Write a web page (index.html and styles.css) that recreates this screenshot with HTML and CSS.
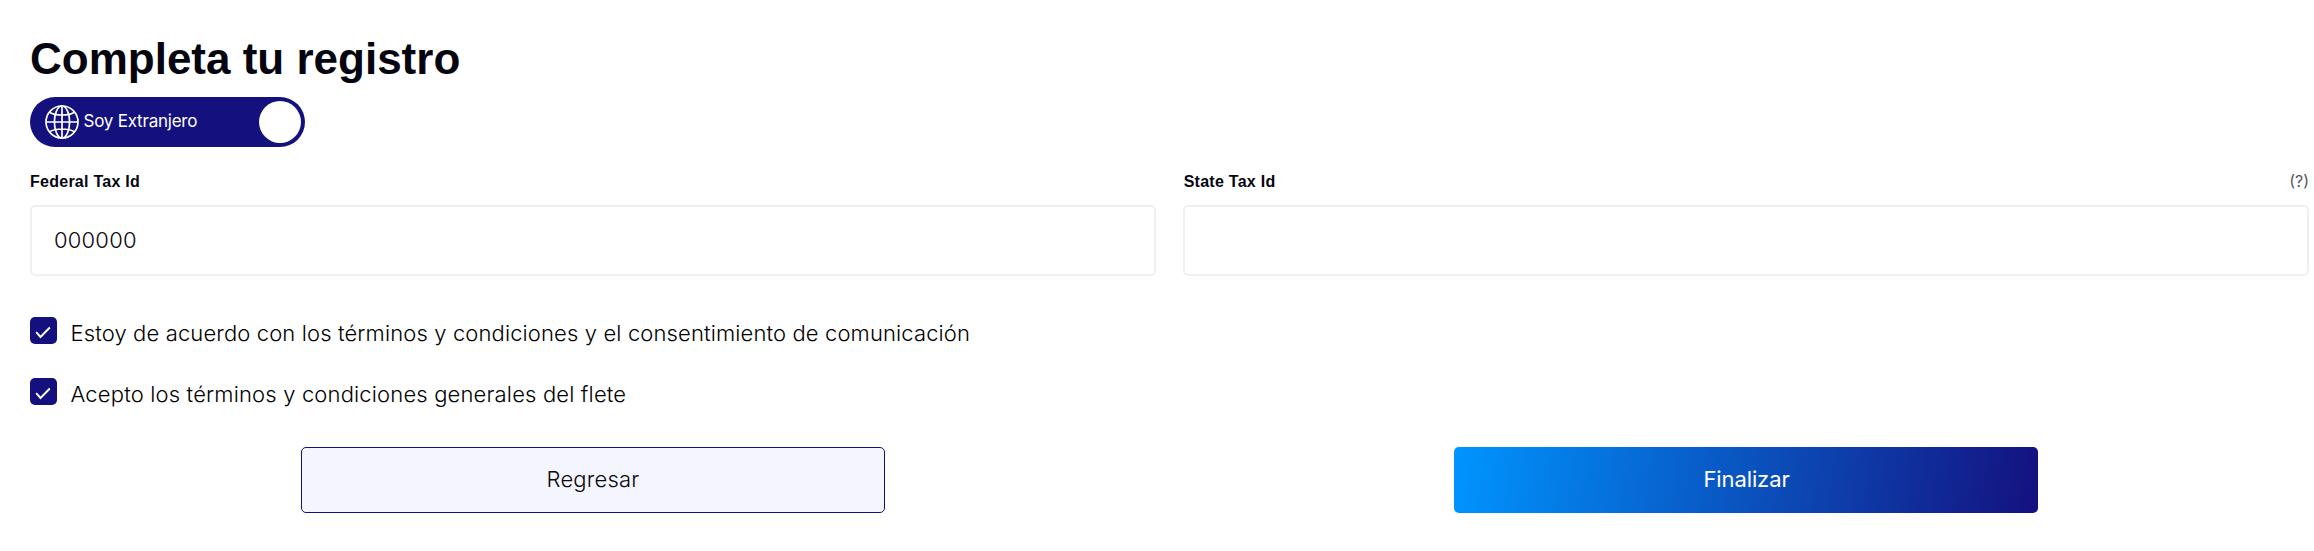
FILE: index.html
```html
<!DOCTYPE html>
<html lang="es">
<head>
<meta charset="utf-8">
<title>Completa tu registro</title>
<link rel="stylesheet" href="styles.css">
</head>
<body>
<main class="page">
  <h1 class="title">Completa tu registro</h1>
  <div class="toggle">
    <svg class="globe" viewBox="0 0 34 34" fill="none" stroke="currentColor" stroke-width="1.7">
      <circle cx="17" cy="17" r="16"/>
      <ellipse cx="17" cy="17" rx="7.6" ry="16"/>
      <path d="M17 1v32M1 17h32M4.6 7.2C8 9.500 12 10 17 10s9-.5 12.400-2.800M4.600 26.800C8 24.500 12 24 17 24s9 .5 12.400 2.800"/>
    </svg>
    <span class="toggle-text">Soy Extranjero</span>
    <span class="knob"></span>
  </div>
  <div class="fields">
    <div class="field">
      <div class="field-head"><span class="label">Federal Tax Id</span></div>
      <div class="input"><span class="value">000000</span></div>
    </div>
    <div class="field">
      <div class="field-head"><span class="label">State Tax Id</span><span class="help">(?)</span></div>
      <div class="input"></div>
    </div>
  </div>
  <div class="checks">
    <div class="check">
      <svg class="box" viewBox="0 0 27 27"><rect width="27" height="27" rx="5" fill="#14117f"/><path d="M6.200 15.200l4.300 4.800L19.800 10.500" fill="none" stroke="#fff" stroke-width="1.900"/></svg>
      <span class="check-text terms">Estoy de acuerdo con los términos y condiciones y el consentimiento de comunicación</span>
    </div>
    <div class="check">
      <svg class="box" viewBox="0 0 27 27"><rect width="27" height="27" rx="5" fill="#14117f"/><path d="M6.200 15.200l4.300 4.800L19.800 10.500" fill="none" stroke="#fff" stroke-width="1.900"/></svg>
      <span class="check-text">Acepto los términos y condiciones generales del flete</span>
    </div>
  </div>
  <div class="actions">
    <button class="btn back">Regresar</button>
    <button class="btn finish">Finalizar</button>
  </div>
</main>
</body>
</html>
```
FILE: styles.css
```css
* { box-sizing: border-box; }
body { margin: 0; background: #fff; color: #05050f; font-family: Inter, sans-serif; }
.page { padding: 34px 5px 0 30px; }
.title { margin: 0; height: 63px; font: bold 44px/50px "Liberation Sans", Arial, sans-serif; }
.toggle { display: flex; align-items: center; width: 275px; height: 50px; padding: 0 4px 0 15px; border-radius: 25px; background: #14117f; color: #fff; }
.globe { width: 34px; height: 34px; }
.toggle-text { margin-left: 4.5px; padding-bottom: 2px; font-size: 17px; letter-spacing: -.22px; }
.knob { width: 42px; height: 42px; margin-left: auto; border-radius: 50%; background: #fff; }
.fields { display: grid; grid-template-columns: 1fr 1fr; gap: 27px; margin-top: 22px; }
.field-head { display: flex; justify-content: space-between; height: 36px; line-height: 24px; }
.label { font: bold 16px/26px "Liberation Sans", Arial, sans-serif; letter-spacing: .26px; }
.field:last-child .label { padding-left: .7px; }
.help { font-size: 16px; color: #55555e; }
.input { display: flex; align-items: center; height: 71px; padding: 0 22px; border: 2px solid #efeff6; border-radius: 5px; }
.value { padding-bottom: 2px; font-size: 22px; font-weight: 300; letter-spacing: .2px; }
.checks { display: grid; gap: 34px; margin-top: 41px; color: #000; }
.check { display: flex; gap: 14px; height: 27px; }
.box { width: 27px; height: 27px; }
.check-text { margin-left: -.5px; font-size: 22px; line-height: 32px; font-weight: 300; letter-spacing: .16px; }
.terms { letter-spacing: .125px; }
.actions { display: flex; justify-content: space-between; padding: 0 271px; margin-top: 42px; }
.btn { width: 584px; height: 66px; padding: 0 0 2px; border: 0; border-radius: 5px; font: 300 22px Inter, sans-serif; letter-spacing: .2px; }
.back { border: 1px solid #14117f; background: #f5f5ff; color: #05050f; }
.finish { padding-left: 1px; background: linear-gradient(98deg, #0095ff, #14117f); color: #fff; font-weight: 400; letter-spacing: -.1px; }
```
